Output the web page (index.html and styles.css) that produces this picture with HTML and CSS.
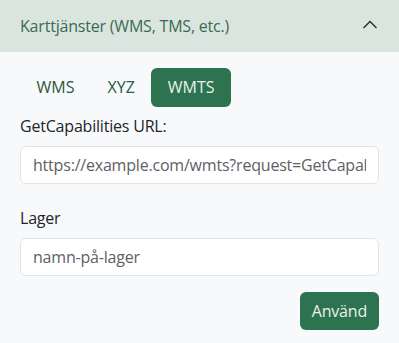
FILE: index.html
```html
<!DOCTYPE html>
<html lang="sv">
<head>
<meta charset="utf-8">
<title>Karttjänster</title>
<link rel="stylesheet" href="styles.css">
</head>
<body>
<div class="panel">
  <div class="panel-header">
    <span class="panel-title">Karttjänster (WMS, TMS, etc.)</span>
    <svg class="chevron" width="16" height="16" viewBox="0 0 16 16">
      <path d="M1.5 11 L8 4.5 L14.5 11" fill="none" stroke="#1f2d26" stroke-width="1.3"/>
    </svg>
  </div>

  <div class="panel-body">
    <div class="tabs">
      <a class="tab">WMS</a>
      <a class="tab">XYZ</a>
      <a class="tab active">WMTS</a>
    </div>

    <div class="field">
      <label class="field-label">GetCapabilities URL:</label>
      <input class="field-input" type="text" placeholder="https://example.com/wmts?request=GetCapabilities">
    </div>

    <div class="field">
      <label class="field-label">Lager</label>
      <input class="field-input" type="text" placeholder="namn-på-lager">
    </div>

    <div class="actions">
      <button class="btn-apply">Använd</button>
    </div>
  </div>
</div>
</body>
</html>
```

FILE: styles.css
```css
body {
  margin: 0;
  background: #f8f9fa;
  font-family: "Open Sans", "Noto Sans", sans-serif;
  font-size: 16px;
  letter-spacing: -0.2px;
  color: #212529;
}
.panel-header {
  height: 52px;
  background: #dbe5df;
  padding: 0 21px 0 20px;
  display: flex;
  align-items: center;
  justify-content: space-between;
}
.panel-title {
  color: #3a6b52;
  font-size: 16px;
}
.chevron {
  display: block;
  margin-top: -2px;
}
.panel-body {
  padding: 16px 20px;
}
.tabs {
  display: flex;
}
.tab {
  display: block;
  padding: 7px 16.5px 8px;
  line-height: 24px;
  letter-spacing: 0;
  color: #2a5a40;
  border-radius: 6px;
}
.tab.active {
  background: #2e7350;
  color: #e8f1ec;
}
.field {
  margin-top: 7px;
}
.field + .field {
  margin-top: 22px;
}
.field-label {
  display: block;
  line-height: 24px;
  margin-bottom: 8px;
  color: #212529;
}
.field-input {
  display: block;
  box-sizing: border-box;
  width: 100%;
  height: 38px;
  padding: 6px 12px;
  font: inherit;
  letter-spacing: inherit;
  border: 1px solid #e1e4e7;
  border-radius: 6px;
  background: #fff;
}
.field-input::placeholder {
  color: #5d6166;
}
.actions {
  display: flex;
  justify-content: flex-end;
  margin-top: 16px;
}
.btn-apply {
  height: 38px;
  padding: 0 12px;
  font: inherit;
  letter-spacing: inherit;
  color: #e8f1ec;
  background: #2e7350;
  border: none;
  border-radius: 6px;
}
```
